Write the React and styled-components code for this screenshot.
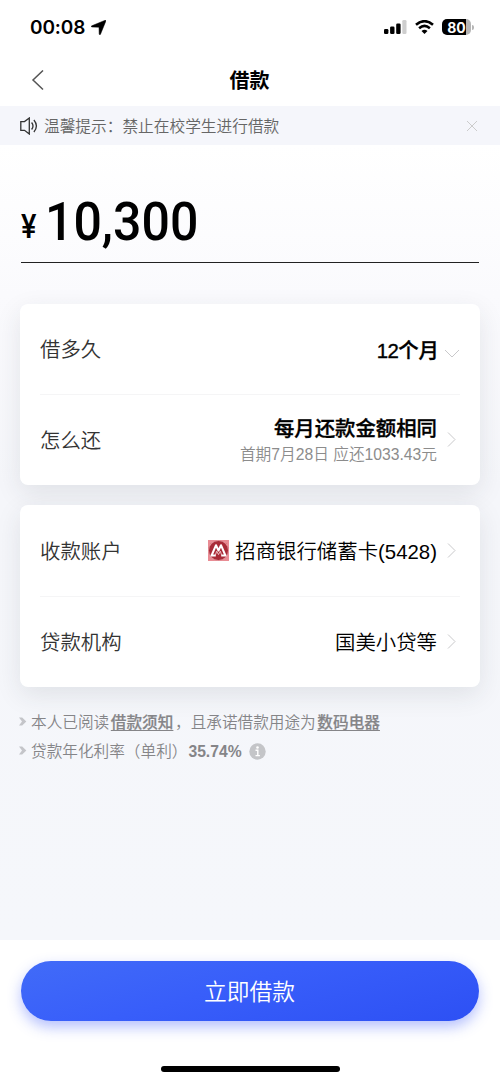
import React from 'react';
import styled, { createGlobalStyle } from 'styled-components';

const Global = createGlobalStyle`
  * { box-sizing: border-box; }
  body {
    margin: 0;
    background: #fff;
    color: #000;
    font-family: "Liberation Sans", "Noto Sans CJK SC", sans-serif;
  }
  svg { display: block; flex: none; }
`;

const Page = styled.div`
  width: 500px;
  height: 1082px;
  display: flex;
  flex-direction: column;
  overflow: hidden;
`;

const StatusBar = styled.div`
  height: 54px;
  padding: 0 26px 0 30px;
  display: flex;
  align-items: center;
  justify-content: space-between;
`;

const Clock = styled.div`
  display: flex;
  align-items: center;
  gap: 6px;
  font: 600 19px/24px Inter, sans-serif;
  letter-spacing: -0.1px;
`;

const Time = styled.span`
  padding-top: 2px;
`;

const Indicators = styled.div`
  display: flex;
  align-items: center;
  gap: 8px;
`;

const Battery = styled.div`
  display: flex;
  align-items: center;
  gap: 1px;
`;

const BatteryLevel = styled.div`
  width: 29px;
  height: 16px;
  border-radius: 5px;
  background: linear-gradient(90deg, #000 24px, #b5b5b5 24px);
  color: #fff;
  font: 700 14px/17px Inter, sans-serif;
  text-align: center;
`;

const BatteryTip = styled.span`
  width: 2px;
  height: 5px;
  border-radius: 0 2px 2px 0;
  background: #b5b5b5;
`;

const NavBar = styled.header`
  height: 52px;
  padding: 0 31px;
  display: grid;
  grid-template-columns: 14px 1fr 14px;
  align-items: center;
`;

const Title = styled.h1`
  margin: 0;
  padding: 2px 1px 0 0;
  text-align: center;
  font-size: 20px;
  line-height: 28px;
  font-weight: 700;
`;

const Notice = styled.div`
  height: 39px;
  padding: 0 22px 0 20px;
  display: flex;
  align-items: center;
  gap: 6px;
  background: #f5f6fb;
  color: #666;
  font-size: 15.7px;
  font-weight: 350;
`;

const NoticeText = styled.span`
  flex: 1;
  padding-top: 2px;
  line-height: 22px;
`;

const Content = styled.main`
  flex: 1;
  padding: 0 20px;
  background: linear-gradient(180deg, #fff 0, #fafafd 150px, #f5f6fa 340px, #f5f7fb 100%);
`;

const Amount = styled.div`
  height: 118px;
  margin: 0 1px;
  padding-bottom: 14px;
  display: flex;
  align-items: flex-end;
  border-bottom: 1.5px solid #222;
  font-family: Roboto, sans-serif;
`;

const Currency = styled.span`
  width: 24px;
  padding-bottom: 4px;
  font-size: 33px;
  line-height: 34px;
  font-weight: 500;
  transform: scaleX(0.88);
  transform-origin: left;
`;

const Figure = styled.span`
  font-size: 54.5px;
  line-height: 54px;
  font-weight: 500;
  transform: scaleX(0.918);
  transform-origin: left;
`;

const Card = styled.section`
  margin-top: ${(p) => p.$top}px;
  padding: 0 20px;
  border-radius: 8px;
  background: #fff;
  box-shadow: 0 8px 26px rgba(40, 45, 60, 0.1);
`;

const Row = styled.div`
  height: ${(p) => p.$height || 91}px;
  padding-right: 4px;
  display: flex;
  align-items: center;
  justify-content: space-between;
  & + & { box-shadow: inset 0 1px #f5f5f6; }
`;

const Label = styled.span`
  padding-top: 2px;
  color: #333;
  font-size: 20.4px;
  line-height: 28px;
  font-weight: 350;
`;

const Value = styled.div`
  display: flex;
  align-items: center;
  gap: ${(p) => p.$gap || 10}px;
  margin-right: ${(p) => p.$shift || 0}px;
`;

const ValueText = styled.div`
  text-align: right;
  font-size: 20.4px;
  line-height: 28px;
  font-weight: ${(p) => (p.$strong ? 500 : 350)};
  -webkit-text-stroke: ${(p) => (p.$strong ? '0.35px #000' : '0')};
  padding-top: ${(p) => p.$drop || 0}px;
`;

const Months = styled.span`
  letter-spacing: -0.6px;
`;

const SubText = styled.div`
  color: #8c8c8c;
  font-size: 15.7px;
  line-height: 23px;
  font-weight: 350;
`;

const Bank = styled.div`
  display: flex;
  align-items: center;
  gap: 6px;
`;

const ArrowDown = styled.span`
  padding-top: 8px;
`;

const Terms = styled.div`
  margin-top: 21px;
  color: #858588;
  font-size: 15.65px;
  font-weight: 350;
`;

const Term = styled.div`
  height: 29px;
  display: flex;
  align-items: center;
  line-height: 29px;
  white-space: nowrap;
`;

const Marker = styled.span`
  width: 12px;
  padding-bottom: 3px;
  margin-left: -1px;
`;

const Link = styled.a`
  margin: 0 1.6px;
  font-weight: 500;
  -webkit-text-stroke: 0.2px #858588;
  text-decoration: underline;
  text-decoration-thickness: 1px;
  text-underline-offset: 2px;
`;

const Rate = styled.b`
  margin: 0 7px 0 1px;
  font-size: 15.7px;
  font-weight: 700;
`;

const Footer = styled.footer`
  height: 142px;
  padding: 21px 21px 0;
  display: flex;
  flex-direction: column;
  align-items: center;
  background: #fff;
`;

const Submit = styled.button`
  width: 458px;
  height: 60px;
  border: 0;
  border-radius: 30px;
  background: linear-gradient(165deg, #416bf8 0%, #385efa 45%, #2d50f4 100%);
  box-shadow: 0 6px 14px rgba(60, 90, 250, 0.38);
  color: #fff;
  font: 350 22.8px/60px "Noto Sans CJK SC", sans-serif;
  padding: 0 1px 0 0;
`;

const HomeBar = styled.div`
  width: 179px;
  height: 6px;
  margin-top: 45px;
  border-radius: 3px;
  background: #000;
`;

const Line = ({ w, h, d, color = '#c9c9cb', sw = 1 }) => (
  <svg width={w} height={h} viewBox={`0 0 ${w} ${h}`} fill="none" stroke={color} strokeWidth={sw}>
    <path d={d} />
  </svg>
);

const Chevron = () => <Line w={9} h={16} d="M1 .5l7 7-7 7" />;

const Bullet = () => (
  <Marker>
    <svg width="8" height="9" viewBox="0 0 8 9">
      <path d="M0 0.5h3.2L7.3 4.5 3.2 8.5H0L3 4.5z" fill="#c4c5c9" />
    </svg>
  </Marker>
);

const BankLogo = () => (
  <svg width="21" height="21" viewBox="0 0 21 21">
    <rect width="21" height="21" fill="#e98c94" />
    <circle cx="10.5" cy="10.5" r="10.2" fill="#a92b37" />
    <circle cx="10.5" cy="10.5" r="10" fill="none" stroke="#f6bcc1" strokeWidth=".7" />
    <path
      d="M2.600 15.600h5.200M13.200 15.600h5.200M3.800 15L8 5.200l2.500 5.300L13 5.200l4.200 9.800"
      fill="none" stroke="#fff" strokeWidth="2" strokeLinejoin="round"
    />
    <path d="M7.400 15l1.300-3.800 1.800 3.400 1.800-3.400 1.300 3.800" fill="none" stroke="#f3c9cd" strokeWidth=".9" />
  </svg>
);

export default function App() {
  return (
    <Page>
      <Global />
      <StatusBar>
        <Clock>
          <Time>00:08</Time>
          <svg width="15" height="15" viewBox="0 0 15 15">
            <path d="M14.3.2c.5-.1.8.2.6.7L9.5 14.2c-.3.8-1.2.7-1.3-.1L8 7.200 1 7C.1 6.900 0 6.100.8 5.800z" stroke="#000" strokeWidth=".5" />
          </svg>
        </Clock>
        <Indicators>
          <svg width="23" height="14" viewBox="0 0 23 14">
            <rect x="0" y="9" width="4.400" height="5" rx="1.300" />
            <rect x="6.100" y="6.500" width="4.400" height="7.500" rx="1.300" />
            <rect x="12.200" y="3.500" width="4.400" height="10.500" rx="1.300" />
            <rect x="18.300" y="0" width="4.200" height="14" rx="1.300" fill="#cecece" />
          </svg>
          <svg width="19" height="14" viewBox="0 0 19 14" fill="none" stroke="#000" strokeWidth="2.600">
            <path d="M1 4.800Q9.500-2.400 18 4.800M4.100 8.200Q9.500 3.600 14.900 8.200" />
            <path d="M9.500 14L6.500 10.900Q9.500 8.600 12.500 10.900z" fill="#000" stroke="none" />
          </svg>
          <Battery>
            <BatteryLevel>80</BatteryLevel>
            <BatteryTip />
          </Battery>
        </Indicators>
      </StatusBar>
      <NavBar>
        <Line w={13} h={21} d="M12 .5L2 10 12 19.500" color="#555" sw={1.5} />
        <Title>借款</Title>
      </NavBar>
      <Notice>
        <svg width="18" height="18" viewBox="0 0 18 18" fill="none" stroke="#333" strokeWidth="1.300">
          <path d="M.8 4.600h3.700L9.300 1v16l-4.800-3.700H.8zM11.600 5.500q2.800 3.500 0 7M13.900 3q5 6 0 12" />
        </svg>
        <NoticeText>温馨提示：禁止在校学生进行借款</NoticeText>
        <Line w={12} h={12} d="M1 1l10 10M11 1L1 11" color="#ccc" />
      </Notice>
      <Content>
        <Amount>
          <Currency>¥</Currency>
          <Figure>10,300</Figure>
        </Amount>
        <Card $top={41}>
          <Row $height={90}>
            <Label>借多久</Label>
            <Value $gap={5} $shift={-4}>
              <ValueText $strong $drop={3}><Months>12</Months>个月</ValueText>
              <ArrowDown>
                <Line w={16} h={9} d="M1 1l7 7 7-7" />
              </ArrowDown>
            </Value>
          </Row>
          <Row>
            <Label>怎么还</Label>
            <Value>
              <div>
                <ValueText $strong $drop={2}>每月还款金额相同</ValueText>
                <SubText>首期7月28日 应还1033.43元</SubText>
              </div>
              <Chevron />
            </Value>
          </Row>
        </Card>
        <Card $top={20}>
          <Row>
            <Label>收款账户</Label>
            <Value>
              <Bank>
                <BankLogo />
                <ValueText $drop={2}>招商银行储蓄卡(5428)</ValueText>
              </Bank>
              <Chevron />
            </Value>
          </Row>
          <Row>
            <Label>贷款机构</Label>
            <Value>
              <ValueText $drop={2}>国美小贷等</ValueText>
              <Chevron />
            </Value>
          </Row>
        </Card>
        <Terms>
          <Term>
            <Bullet />
            <span>本人已阅读<Link>借款须知</Link>，且承诺借款用途为<Link>数码电器</Link></span>
          </Term>
          <Term>
            <Bullet />
            <span>贷款年化利率（单利）</span>
            <Rate>35.74%</Rate>
            <svg width="17" height="17" viewBox="0 0 17 17">
              <circle cx="8.500" cy="8.500" r="8.200" fill="#c4c5c8" />
              <circle cx="8.500" cy="4.500" r="1.300" fill="#fff" />
              <path d="M6.500 7.200h2.300v5.200M6.500 12.600h4.400" fill="none" stroke="#fff" strokeWidth="1.400" />
            </svg>
          </Term>
        </Terms>
      </Content>
      <Footer>
        <Submit>立即借款</Submit>
        <HomeBar />
      </Footer>
    </Page>
  );
}
